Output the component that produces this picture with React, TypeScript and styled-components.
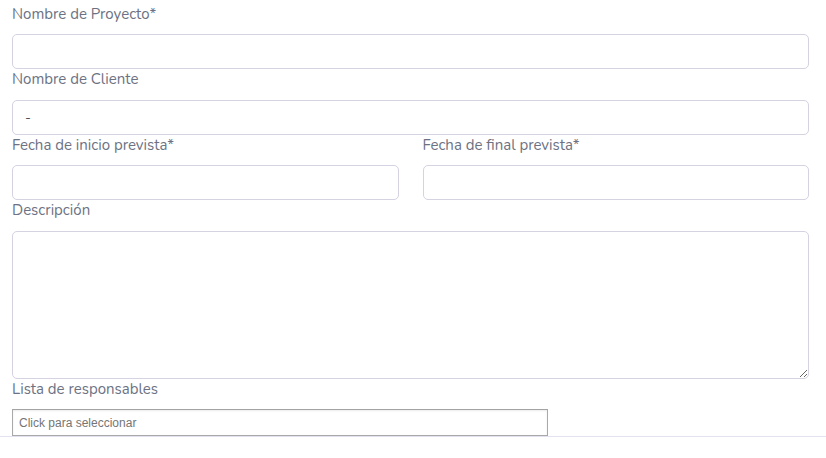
import React from "react";
import styled, { createGlobalStyle } from "styled-components";

const Global = createGlobalStyle`
  html, body { margin: 0; padding: 0; background: #ffffff; }
  * { box-sizing: border-box; }
`;

const Page = styled.div`
  width: 826px;
  font-family: "Nunito", "Noto Sans", "Lato", sans-serif;
`;

const Form = styled.div`
  padding: 3.5px 17px 0 12px;
  display: flex;
  flex-direction: column;
`;

const Label = styled.label`
  display: block;
  font-size: 15px;
  line-height: 21px;
  color: #6c7283;
  margin-bottom: 9.5px;
  height: 21px;
  white-space: nowrap;
`;

const Field = styled.div`
  display: flex;
  flex-direction: column;
  min-width: 0;
`;

const Input = styled.input`
  width: 100%;
  height: 35px;
  border: 1px solid #d5d2e2;
  border-radius: 5px;
  padding: 0 12px;
  font-family: inherit;
  font-size: 14px;
  color: #495057;
  outline: none;
  background: #fff;
`;

const Row = styled.div`
  display: grid;
  grid-template-columns: 1fr 1fr;
  column-gap: 24px;
`;

const TextArea = styled.textarea`
  width: 100%;
  height: 148px;
  border: 1px solid #d5d2e2;
  border-radius: 5px;
  padding: 8px 12px;
  font-family: inherit;
  font-size: 14px;
  resize: vertical;
  outline: none;
  display: block;
`;

const SelectBox = styled.input`
  width: 536px;
  height: 27px;
  border: 1px solid #a9a9a9;
  border-top-color: #a3a3a3;
  box-shadow: inset 0 1px 2px rgba(0, 0, 0, 0.08);
  padding: 0 6px;
  font-family: "Liberation Sans", Arial, sans-serif;
  font-size: 12px;
  color: #444;
  outline: none;
  display: block;
  &::placeholder { color: #757575; }
`;

const Divider = styled.div`
  height: 1px;
  background: #e2e1ef;
  width: 826px;
`;

export default function App() {
  return (
    <Page>
      <Global />
      <Form>
        <Field>
          <Label>Nombre de Proyecto*</Label>
          <Input defaultValue="" />
        </Field>
        <Field>
          <Label>Nombre de Cliente</Label>
          <Input defaultValue="-" />
        </Field>
        <Row>
          <Field>
            <Label>Fecha de inicio prevista*</Label>
            <Input />
          </Field>
          <Field>
            <Label>Fecha de final prevista*</Label>
            <Input />
          </Field>
        </Row>
        <Field>
          <Label>Descripción</Label>
          <TextArea />
        </Field>
        <Field>
          <Label>Lista de responsables</Label>
          <SelectBox placeholder="Click para seleccionar" readOnly />
        </Field>
      </Form>
      <Divider />
    </Page>
  );
}
